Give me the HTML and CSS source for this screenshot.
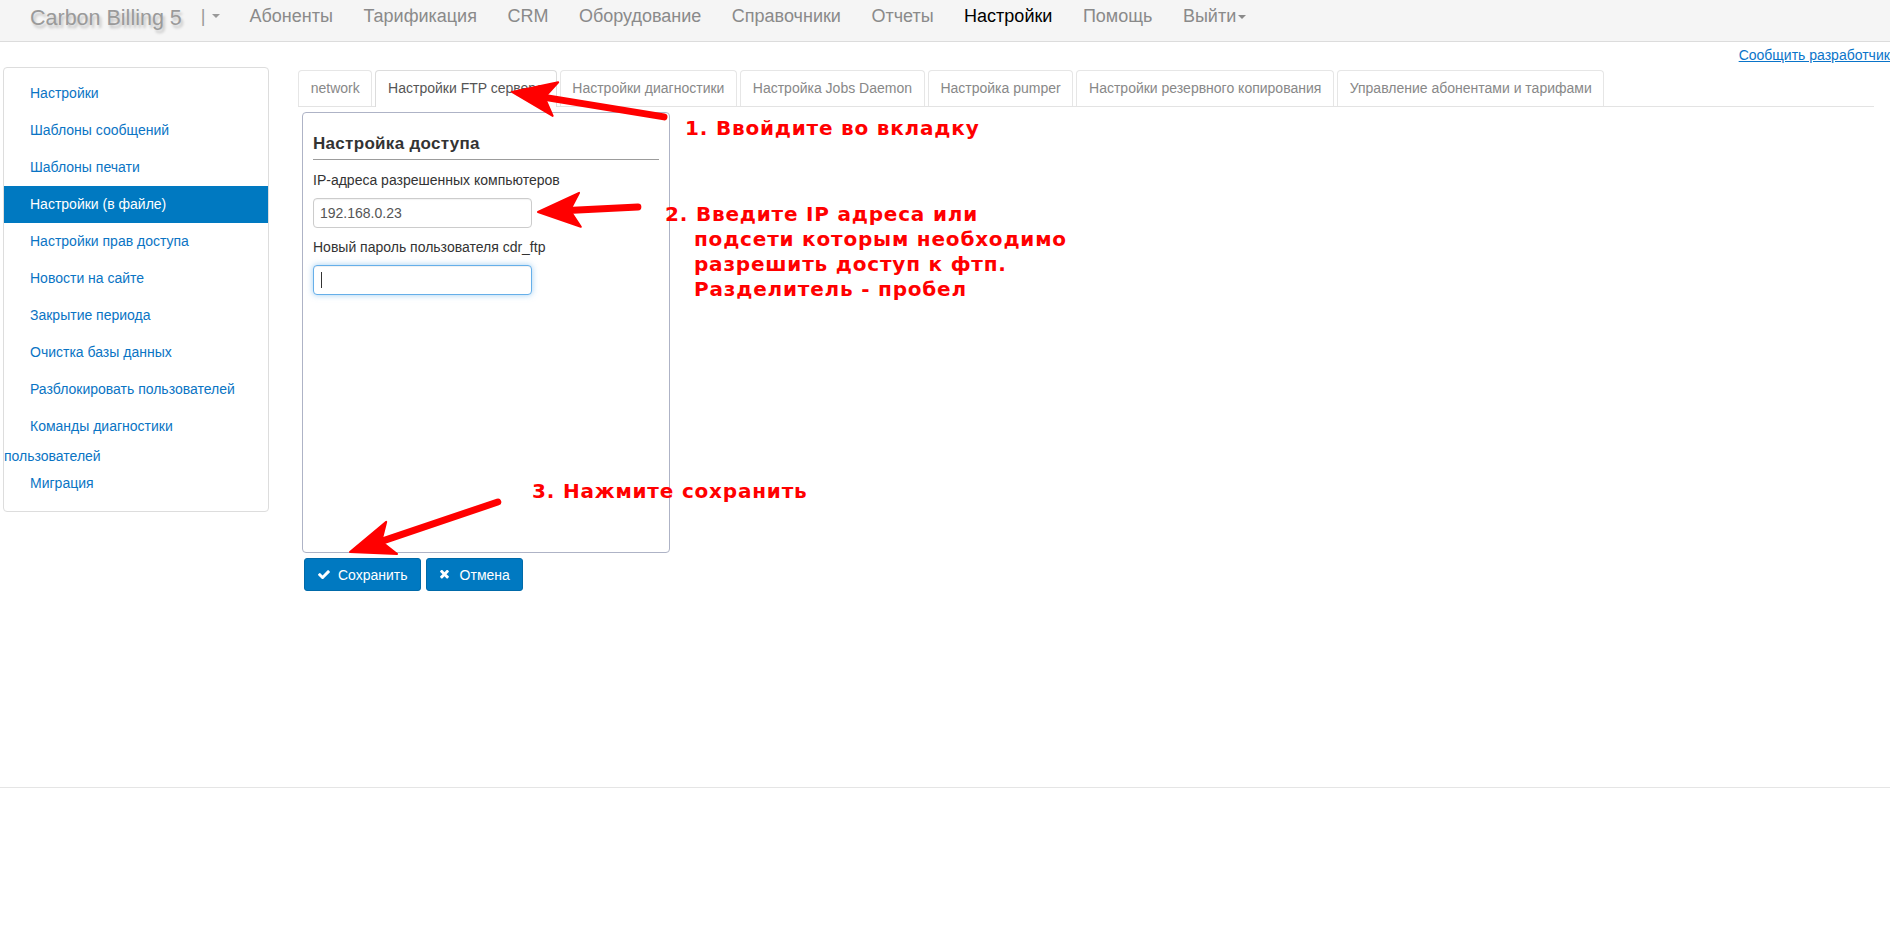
FILE: index.html
```html
<!DOCTYPE html>
<html lang="ru">
<head>
<meta charset="utf-8">
<title>Carbon Billing 5 — Настройки</title>
<link rel="stylesheet" href="styles.css">
</head>
<body>
<header class="navbar">
  <span class="brand">Carbon Billing 5</span>
  <span class="brand-sep">|</span>
  <span class="caret caret--light"></span>
  <nav class="nav">
    <a class="nav-link">Абоненты</a>
    <a class="nav-link">Тарификация</a>
    <a class="nav-link">CRM</a>
    <a class="nav-link">Оборудование</a>
    <a class="nav-link">Справочники</a>
    <a class="nav-link">Отчеты</a>
    <a class="nav-link nav-link--active">Настройки</a>
    <a class="nav-link">Помощь</a>
    <a class="nav-link">Выйти<span class="caret"></span></a>
  </nav>
</header>

<div class="toplink-row">
  <a class="toplink">Сообщить разработчику</a>
</div>

<main class="page-main">
  <aside class="sidebar">
    <a class="side-link">Настройки</a>
    <a class="side-link">Шаблоны сообщений</a>
    <a class="side-link">Шаблоны печати</a>
    <a class="side-link side-link--active">Настройки (в файле)</a>
    <a class="side-link">Настройки прав доступа</a>
    <a class="side-link">Новости на сайте</a>
    <a class="side-link">Закрытие периода</a>
    <a class="side-link">Очистка базы данных</a>
    <a class="side-link">Разблокировать пользователей</a>
    <a class="side-link side-link--wrap">Команды диагностики пользователей</a>
    <a class="side-link side-link--after">Миграция</a>
  </aside>

  <section class="content">
    <ul class="tabs">
      <li class="tab">network</li>
      <li class="tab tab--active">Настройки FTP сервера</li>
      <li class="tab">Настройки диагностики</li>
      <li class="tab">Настройка Jobs Daemon</li>
      <li class="tab">Настройка pumper</li>
      <li class="tab">Настройки резервного копирования</li>
      <li class="tab">Управление абонентами и тарифами</li>
    </ul>

    <div class="form-panel">
      <h3 class="form-legend">Настройка доступа</h3>
      <label class="form-label">IP-адреса разрешенных компьютеров</label>
      <input class="form-input" type="text" value="192.168.0.23">
      <label class="form-label form-label--second">Новый пароль пользователя cdr_ftp</label>
      <div class="input-wrap">
        <input class="form-input form-input--focus" type="text" value="">
        <span class="text-caret"></span>
      </div>
    </div>

    <div class="btn-row">
      <button class="btn">
        <svg class="btn-icon" viewBox="120 360 1560 1080"><path d="M1671 566q0 40-28 68l-724 724-136 136q-28 28-68 28t-68-28l-136-136-362-362q-28-28-28-68t28-68l136-136q28-28 68-28t68 28l294 295 656-657q28-28 68-28t68 28l136 136q28 28 28 68z" fill="#fff"/></svg>
        Сохранить
      </button>
      <button class="btn">
        <svg class="btn-icon btn-icon--x" viewBox="100 450 1210 1110"><path d="M1298 1322q0 40-28 68l-136 136q-28 28-68 28t-68-28l-294-294-294 294q-28 28-68 28t-68-28l-136-136q-28-28-28-68t28-68l294-294-294-294q-28-28-28-68t28-68l136-136q28-28 68-28t68 28l294 294 294-294q28-28 68-28t68 28l136 136q28 28 28 68t-28 68l-294 294 294 294q28 28 28 68z" fill="#fff"/></svg>
        Отмена
      </button>
    </div>
  </section>
</main>

<footer class="footer"></footer>

<div class="annotations">
  <svg class="arrows" width="1890" height="931" viewBox="0 0 1890 931">
    <g transform="translate(512 92) rotate(9.3)">
      <line x1="30" y1="0" x2="154" y2="0" class="arrow-shaft"/>
      <polygon points="0,0 44,-17 33,0 44,17" class="arrow-head"/>
    </g>
    <g transform="translate(538 212) rotate(-2.9)">
      <line x1="30" y1="0" x2="100" y2="0" class="arrow-shaft"/>
      <polygon points="0,0 42,-17 32,0 42,17" class="arrow-head"/>
    </g>
    <g transform="translate(350 552) rotate(-18.7)">
      <line x1="30" y1="0" x2="156" y2="0" class="arrow-shaft"/>
      <polygon points="0,0 44,-17 33,0 44,17" class="arrow-head"/>
    </g>
  </svg>
  <div class="note note--1">1. Ввойдите во вкладку</div>
  <div class="note note--2">2. Введите IP адреса или подсети которым необходимо разрешить доступ к фтп. Разделитель - пробел</div>
  <div class="note note--3">3. Нажмите сохранить</div>
</div>
</body>
</html>
```

FILE: styles.css
```css
html, body {
  margin: 0;
  padding: 0;
  overflow: hidden;
  background: #fff;
}

body {
  font-family: "Liberation Sans", Arial, sans-serif;
  font-size: 14px;
  color: #333;
  position: relative;
  min-height: 931px;
}

/* ---------- navbar ---------- */
.navbar {
  height: 41px;
  background: #f5f5f5;
  border-bottom: 1px solid #dcdcdc;
  display: flex;
  align-items: flex-start;
  padding-left: 30px;
}

.brand {
  font-size: 21.5px;
  line-height: 26px;
  margin-top: 5px;
  color: #9a9a9a;
  text-shadow: 2px 3px 3px rgba(0, 0, 0, 0.22);
}

.brand-sep {
  margin-left: 19px;
  margin-top: 6px;
  font-size: 18px;
  line-height: 20px;
  color: #999;
}

.caret {
  display: inline-block;
  width: 0;
  height: 0;
  border-top: 4px solid #8a8a8a;
  border-left: 4px solid transparent;
  border-right: 4px solid transparent;
  margin-left: 2px;
  vertical-align: middle;
}

.caret--light {
  margin-left: 7px;
  margin-top: 14px;
  border-top-color: #999;
}

.nav {
  display: flex;
  margin-left: 29px;
  margin-top: 6px;
  gap: 30.5px;
}

.nav-link {
  font-size: 18px;
  line-height: 20px;
  color: #8a8a8a;
  white-space: nowrap;
}

.nav-link--active {
  color: #000;
}

/* ---------- top link ---------- */
.toplink-row {
  display: flex;
  justify-content: flex-end;
  margin-right: -7px;
  height: 25px;
}

.toplink {
  margin-top: 3px;
  line-height: 20px;
  font-size: 14px;
  color: #0a74c9;
  text-decoration: underline;
  white-space: nowrap;
}

/* ---------- main ---------- */
.page-main {
  display: flex;
  align-items: flex-start;
  height: 720px;
}

.sidebar {
  width: 264px;
  margin-left: 3px;
  border: 1px solid #ddd;
  border-radius: 4px;
  padding: 7px 0 9px;
  display: flex;
  flex-direction: column;
}

.side-link {
  display: block;
  padding: 10px 12px 10px 0;
  text-indent: 26px;
  line-height: 17px;
  color: #0a74c4;
}

.side-link--active {
  background: #0079c1;
  color: #fff;
}

.side-link--wrap {
  padding-top: 3px;
  padding-bottom: 0;
  line-height: 30px;
  padding-right: 40px;
}

.side-link--after {
  padding-top: 4px;
}

/* ---------- content ---------- */
.content {
  flex: 1;
  margin-left: 29px;
  margin-right: 16px;
  margin-top: 3px;
}

.tabs {
  list-style: none;
  margin: 0;
  padding: 0;
  display: flex;
  border-bottom: 1px solid #e3e3e3;
}

.tab {
  padding: 9px 11.7px;
  line-height: 17px;
  border: 1px solid #e6e6e6;
  border-bottom: none;
  border-radius: 4px 4px 0 0;
  margin-right: 3px;
  color: #888;
  white-space: nowrap;
}

.tab--active {
  color: #555;
  border-color: #dcdcdc;
  background: #fff;
  margin-bottom: -1px;
  padding-bottom: 10px;
}

.form-panel {
  width: 346px;
  height: 398px;
  margin-top: 5px;
  margin-left: 4px;
  border: 1px solid #aeb3c6;
  border-radius: 4px;
  padding: 21px 10px 20px 10px;
}

.form-legend {
  margin: 0;
  font-size: 17px;
  line-height: 20px;
  font-weight: bold;
  color: #333;
  letter-spacing: 0.3px;
  padding-bottom: 5px;
  border-bottom: 1px solid #9c9c9c;
}

.form-label {
  display: block;
  margin-top: 10px;
  line-height: 20px;
  font-size: 14px;
  color: #333;
}

.form-label--second {
  margin-top: 9px;
}

.form-input {
  display: block;
  box-sizing: border-box;
  width: 219px;
  height: 30px;
  margin-top: 8px;
  padding: 4px 6px;
  border: 1px solid #ccc;
  border-radius: 4px;
  font-family: "Liberation Sans", Arial, sans-serif;
  font-size: 14px;
  color: #555;
  background: #fff;
  box-shadow: inset 0 1px 1px rgba(0, 0, 0, 0.05);
}

.input-wrap {
  position: relative;
}

.form-input--focus {
  border-color: #66afe9;
  box-shadow: inset 0 1px 1px rgba(0, 0, 0, 0.06), 0 0 6px rgba(102, 175, 233, 0.6);
}

.text-caret {
  position: absolute;
  left: 8px;
  top: 7px;
  width: 1px;
  height: 16px;
  background: #333;
}

.btn-row {
  display: flex;
  gap: 5px;
  margin-top: 5px;
  margin-left: 6px;
}

.btn {
  display: flex;
  align-items: center;
  height: 33px;
  padding: 0 12px 0 13px;
  background: #0079c1;
  border: 1px solid #006aa9;
  border-radius: 3px;
  color: #fff;
  font-family: "Liberation Sans", Arial, sans-serif;
  font-size: 14px;
}

.btn-icon {
  width: 12px;
  height: 9px;
  margin-right: 8px;
}

.btn-icon--x {
  width: 9px;
  height: 9px;
  margin-right: 11px;
}

/* ---------- footer ---------- */
.footer {
  border-top: 1px solid #e5e5e5;
  height: 144px;
}

/* ---------- annotations (overlay) ---------- */
.annotations {
  position: absolute;
  left: 0;
  top: 0;
  width: 1890px;
  height: 931px;
  pointer-events: none;
}

.arrows {
  position: absolute;
  left: 0;
  top: 0;
}

.arrow-shaft {
  stroke: #f00;
  stroke-width: 7;
  stroke-linecap: round;
}

.arrow-head {
  fill: #f00;
  stroke: #f00;
  stroke-width: 2;
  stroke-linejoin: round;
}

.note {
  position: absolute;
  font-family: "DejaVu Sans", sans-serif;
  font-weight: bold;
  font-size: 20px;
  line-height: 25px;
  letter-spacing: 0.8px;
  color: #f00;
  white-space: nowrap;
}

.note--1 {
  left: 685px;
  top: 116px;
}

.note--2 {
  left: 665px;
  top: 202px;
  width: 390px;
  white-space: normal;
  padding-left: 29px;
  text-indent: -29px;
}

.note--3 {
  left: 532px;
  top: 479px;
}
```
